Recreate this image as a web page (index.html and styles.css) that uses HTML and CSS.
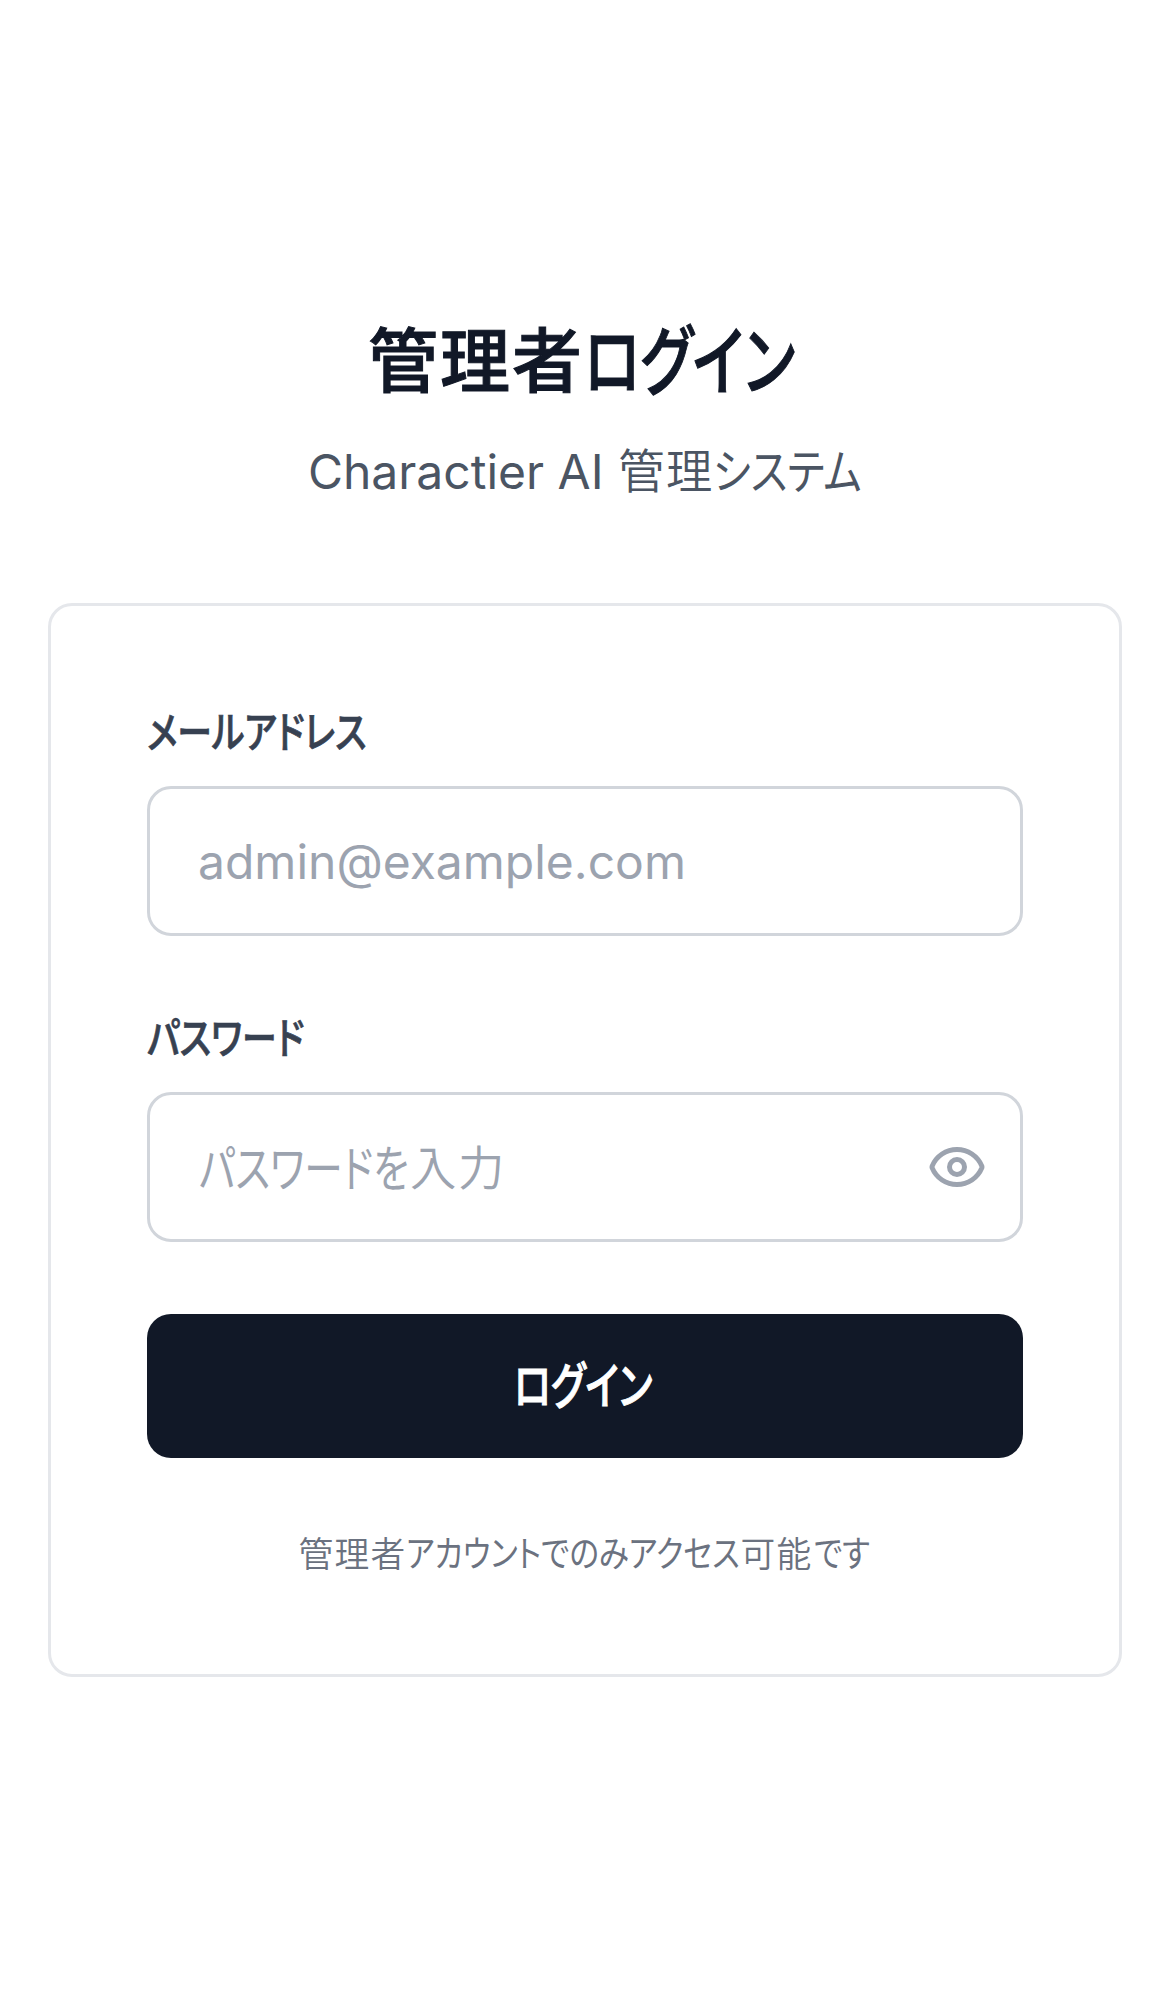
FILE: index.html
```html
<!DOCTYPE html>
<html lang="ja">
<head>
<meta charset="utf-8">
<title>管理者ログイン</title>
<link rel="stylesheet" href="styles.css">
</head>
<body>
<main class="page">
  <header class="intro">
    <h1 class="title"><span class="kanji-title">管理者</span><span class="kana kana-title">ログイン</span></h1>
    <p class="subtitle"><span>Charactier AI&nbsp;</span><span class="kanji">管理</span><span class="kana kana-subtitle">システム</span></p>
  </header>
  <form class="card">
    <div class="field">
      <label class="label"><span class="kana kana-label">メールアドレス</span></label>
      <div class="input"><span>admin@example.com</span></div>
    </div>
    <div class="field">
      <label class="label"><span class="kana kana-label">パスワード</span></label>
      <div class="input"><span class="kana kana-hint">パスワードを</span><span class="kanji">入力</span>
        <svg class="eye" viewBox="0 0 24 24" fill="none" stroke="currentColor" stroke-width="2" stroke-linecap="round" stroke-linejoin="round"><path d="M2.062 12.348a1 1 0 0 1 0-.696 10.75 10.75 0 0 1 19.876 0 1 1 0 0 1 0 .696 10.75 10.75 0 0 1-19.876 0"/><circle cx="12" cy="12" r="3"/></svg>
      </div>
    </div>
    <button class="submit" type="button"><span class="kana kana-submit">ログイン</span></button>
    <p class="note"><span class="kanji">管理者</span><span class="kana kana-note">アカウントでのみアクセス</span><span class="kanji">可能</span><span class="kana kana-desu">です</span></p>
  </form>
</main>
</body>
</html>
```
FILE: styles.css
```css
* { box-sizing: border-box; margin: 0; }
body {
  background: #fff;
  font-family: Inter, "Noto Sans CJK JP", sans-serif;
  color: #111827;
}
.page {
  min-height: 1992px;
  padding: 0 48px;
  display: flex;
  flex-direction: column;
  justify-content: center;
}
.intro { margin-bottom: 96px; }
.title, .subtitle, .note { display: flex; justify-content: center; white-space: nowrap; }
.title { height: 96px; font-size: 72px; line-height: 94px; font-weight: 500; -webkit-text-stroke: 1px currentColor; }
.subtitle { height: 72px; margin-top: 24px; font-size: 48px; line-height: 74px; color: #4b5563; }
.card {
  border: 3px solid #e5e7eb;
  border-radius: 24px;
  padding: 96px;
  display: flex;
  flex-direction: column;
  gap: 72px;
}
.field { display: flex; flex-direction: column; gap: 24px; }
.label { display: flex; height: 60px; font-size: 42px; line-height: 61px; font-weight: 500; -webkit-text-stroke: 0.7px currentColor; color: #374151; }
.input {
  display: flex;
  align-items: center;
  height: 150px;
  padding: 0 33px 0 48px;
  border: 3px solid #d1d5db;
  border-radius: 24px;
  font-size: 48px;
  line-height: 72px;
  color: #9ca3af;
  white-space: nowrap;
}
.input span { padding-top: 2px; }
.eye { width: 60px; height: 60px; margin-left: auto; }
.submit {
  display: flex;
  align-items: center;
  justify-content: center;
  height: 144px;
  padding: 0;
  border: 0;
  border-radius: 24px;
  background: #111827;
  color: #fff;
  font: 500 48px/72px Inter, "Noto Sans CJK JP", sans-serif;
  -webkit-text-stroke: 1px currentColor;
}
.note { font-size: 36px; line-height: 48px; color: #6b7280; }

.kanji-title { font-size: 70px; letter-spacing: 2px; }
.kanji { font-size: 0.965em; letter-spacing: 0.036em; font-weight: 350; }
.subtitle .kanji { line-height: 73px; transform: translateX(1px); }

/* Narrow proportional kana: each run is condensed into its own width. */
.kana {
  display: block;
  white-space: nowrap;
  font-feature-settings: "palt";
  transform-origin: 0 50%;
  transform: scaleX(0.85);
}
.kana-title { width: 218px; transform: scale(0.803, 1.06); }
.kana-subtitle { width: 149px; }
.kana-label { transform: scale(0.83, 1.03); }
.kana-hint { width: 212px; transform: translateX(1px) scale(0.805, 1.03); }
.input .kana-hint { padding-top: 4px; }
.kana-submit { width: 144px; transform: translateX(1px) scale(0.79, 1.04); }
.kana-note { width: 334px; }
.kana-desu { width: 59px; transform: translateX(2px) scaleX(0.85); }
```
